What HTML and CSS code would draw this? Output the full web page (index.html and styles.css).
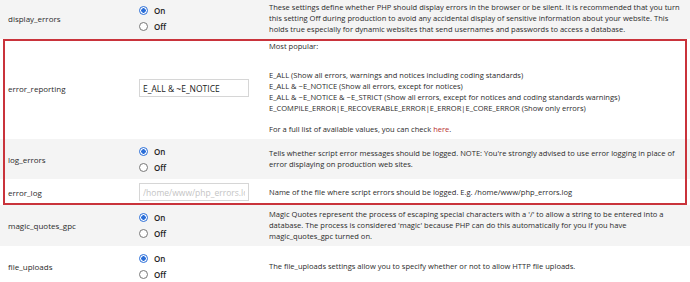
FILE: index.html
```html
<!DOCTYPE html>
<html lang="en">

<head>
    <meta charset="UTF-8">
    <meta name="viewport" content="width=device-width, initial-scale=1.0">
    <title>PHP Settings</title>
    <link rel="stylesheet" href="styles.css">
</head>

<body>

    <div class="settings">

        <div class="row shaded">
            <div class="name">display_errors</div>
            <div class="control">
                <label class="choice"><input type="radio" name="display_errors" checked> On</label>
                <label class="choice"><input type="radio" name="display_errors"> Off</label>
            </div>
            <div class="info">These settings define whether PHP should display errors in the browser or be silent. It is recommended that you turn this setting Off during production to avoid any accidental display of sensitive information about your website. This holds true especially for dynamic websites that send usernames and passwords to access a database.</div>
        </div>

        <div class="highlight">
            <div class="row reporting">
                <div class="name">error_reporting</div>
                <div class="control">
                    <input type="text" class="field" value="E_ALL &amp; ~E_NOTICE">
                </div>
                <div class="info">
                    <p class="intro">Most popular:</p>
                    <p class="values">
                        E_ALL (Show all errors, warnings and notices including coding standards)<br>
                        E_ALL &amp; ~E_NOTICE (Show all errors, except for notices)<br>
                        E_ALL &amp; ~E_NOTICE &amp; ~E_STRICT (Show all errors, except for notices and coding standards warnings)<br>
                        E_COMPILE_ERROR|E_RECOVERABLE_ERROR|E_ERROR|E_CORE_ERROR (Show only errors)
                    </p>
                    <p>For a full list of available values, you can check <a href="#">here</a>.</p>
                </div>
            </div>

            <div class="row shaded">
                <div class="name">log_errors</div>
                <div class="control">
                    <label class="choice"><input type="radio" name="log_errors" checked> On</label>
                    <label class="choice"><input type="radio" name="log_errors"> Off</label>
                </div>
                <div class="info">Tells whether script error messages should be logged. NOTE: You're strongly advised to use error logging in place of error displaying on production web sites.</div>
            </div>

            <div class="row">
                <div class="name">error_log</div>
                <div class="control">
                    <input type="text" class="field" placeholder="/home/www/php_errors.log">
                </div>
                <div class="info">Name of the file where script errors should be logged. E.g. /home/www/php_errors.log</div>
            </div>
        </div>

        <div class="row shaded">
            <div class="name">magic_quotes_gpc</div>
            <div class="control">
                <label class="choice"><input type="radio" name="magic_quotes_gpc" checked> On</label>
                <label class="choice"><input type="radio" name="magic_quotes_gpc"> Off</label>
            </div>
            <div class="info">Magic Quotes represent the process of escaping special characters with a '/' to allow a string to be entered into a database. The process is considered 'magic' because PHP can do this automatically for you if you have magic_quotes_gpc turned on.</div>
        </div>

        <div class="row">
            <div class="name">file_uploads</div>
            <div class="control">
                <label class="choice"><input type="radio" name="file_uploads" checked> On</label>
                <label class="choice"><input type="radio" name="file_uploads"> Off</label>
            </div>
            <div class="info">The file_uploads settings allow you to specify whether or not to allow HTTP file uploads.</div>
        </div>

    </div>

</body>

</html>
```

FILE: styles.css
```css
body {
    margin: 0;
    background-color: #fff;
    font-family: "Open Sans", Arial, sans-serif;
    font-size: 7.55px;
    color: #2b2b2b;
}

.settings {
    margin-top: -2px;
}

.row {
    display: grid;
    grid-template-columns: 139px 130px 1fr;
    align-items: center;
    padding: 4px 5px 4px 0;
    background-color: #fff;
}

.row.shaded {
    background-color: #f4f4f4;
}

.row.reporting {
    padding-top: 2px;
}

.name {
    padding-left: 8px;
    font-size: 8px;
}

.info {
    line-height: 11px;
}

.info p {
    margin: 0;
}

.info .intro {
    margin-bottom: 18px;
}

.info .values {
    margin-bottom: 10px;
}

.info a {
    color: #b8312f;
    text-decoration: none;
}

.choice {
    display: flex;
    align-items: center;
    gap: 6px;
    height: 16px;
    font-size: 8px;
    font-weight: 600;
    color: #222;
}

.choice input {
    appearance: none;
    -webkit-appearance: none;
    width: 9px;
    height: 9px;
    margin: 0;
    border: 1px solid #777;
    border-radius: 50%;
    box-sizing: border-box;
    background-color: #fff;
}

.choice input:checked {
    border-color: #2a6ed8;
    background: radial-gradient(circle, #2a6ed8 0 2px, #fff 2.5px);
}

.field {
    width: 110px;
    height: 18px;
    padding: 0 3px;
    margin: 0;
    box-sizing: border-box;
    border: 1px solid #d6d6d6;
    font-family: "Open Sans", Arial, sans-serif;
    font-size: 8.5px;
    color: #222;
}

.field::placeholder {
    color: #c4c4c4;
}

.highlight {
    position: relative;
}

.highlight::after {
    content: "";
    position: absolute;
    top: 0;
    bottom: 0;
    left: 3px;
    right: 3px;
    border: 2px solid #c9333b;
    pointer-events: none;
}
```
